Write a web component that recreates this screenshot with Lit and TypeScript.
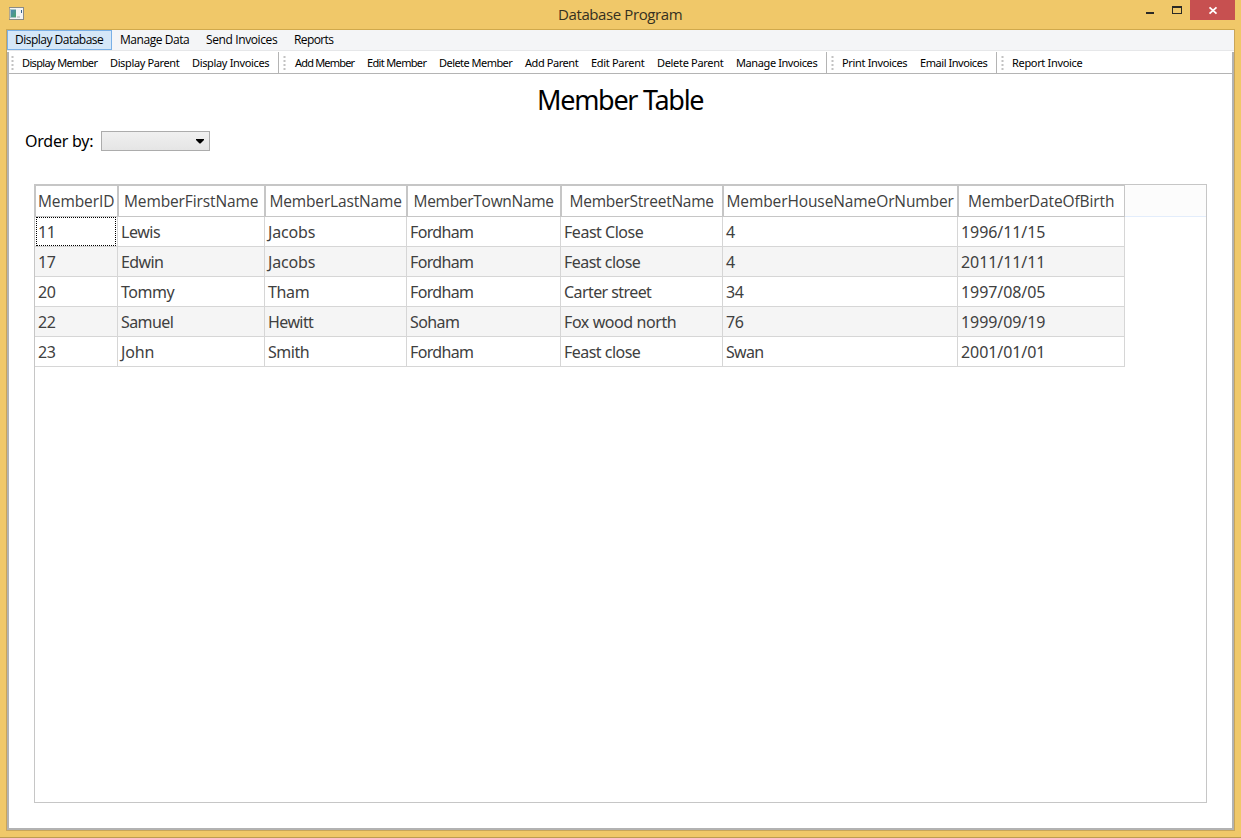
import { LitElement, html, css, svg } from "lit";
import { customElement, property } from "lit/decorators.js";

/** One line of text whose tracking is adjusted to fill a given width. */
@customElement("fit-label")
class FitLabel extends LitElement {
  @property() text = "";
  @property({ type: Number }) span = 0;

  static styles = css`
    :host { display: block; flex: none; white-space: pre; }
    .line { display: inline-block; }
  `;

  updated() {
    const el = this.renderRoot.querySelector(".line") as HTMLElement;
    el.style.letterSpacing = "0px";
    const natural = el.getBoundingClientRect().width;
    el.style.letterSpacing = `${(this.span - 0.7 - natural) / this.text.length}px`;
    this.style.width = `${this.span}px`;
  }

  render() {
    return html`<span class="line">${this.text}</span>`;
  }
}

type Item = [string, number];

const menus: Item[] = [["Display Database", 89], ["Manage Data", 70], ["Send Invoices", 72], ["Reports", 40]];

const toolbars: Item[][] = [
  [["Display Member", 76], ["Display Parent", 70], ["Display Invoices", 78]],
  [["Add Member", 60], ["Edit Member", 60], ["Delete Member", 74], ["Add Parent", 54], ["Edit Parent", 54], ["Delete Parent", 67], ["Manage Invoices", 82]],
  [["Print Invoices", 66], ["Email Invoices", 68]],
  [["Report Invoice", 71]],
];

const columns: Item[] = [
  ["MemberID", 77], ["MemberFirstName", 135], ["MemberLastName", 133], ["MemberTownName", 141],
  ["MemberStreetName", 145], ["MemberHouseNameOrNumber", 228], ["MemberDateOfBirth", 147],
];

const rows: Item[][] = [
  [["11", 18], ["Lewis", 40], ["Jacobs", 48], ["Fordham", 64], ["Feast Close", 80], ["4", 9], ["1996/11/15", 85]],
  [["17", 18], ["Edwin", 43], ["Jacobs", 48], ["Fordham", 64], ["Feast close", 77], ["4", 9], ["2011/11/11", 85]],
  [["20", 18], ["Tommy", 54], ["Tham", 42], ["Fordham", 64], ["Carter street", 88], ["34", 18], ["1997/08/05", 85]],
  [["22", 18], ["Samuel", 53], ["Hewitt", 46], ["Soham", 50], ["Fox wood north", 113], ["76", 18], ["1999/09/19", 85]],
  [["23", 18], ["John", 34], ["Smith", 42], ["Fordham", 64], ["Feast close", 77], ["Swan", 38], ["2001/01/01", 85]],
];

const label = ([text, span]: Item) => html`<fit-label .text=${text} .span=${span}></fit-label>`;

@customElement("app-root")
class AppRoot extends LitElement {
  static styles = css`
    * { box-sizing: border-box; }
    :host {
      display: flex; flex-direction: column; width: 1241px; height: 838px;
      background: #f0c869; border-bottom: 1px solid #bd9c50; box-sizing: border-box;
      padding: 0 6px 6px; font-family: "Noto Sans", "Open Sans", sans-serif; color: #000;
      overflow: hidden;
    }
    svg { display: block; flex: none; }
    .titlebar { display: grid; grid-template-columns: 1fr auto 1fr; height: 29px; flex: none; }
    .app-icon { margin: 7px 0 0 3px; }
    .caption { font: 15px/20px "Open Sans", sans-serif; color: #35301f; padding-top: 4px; }
    .controls { display: flex; justify-content: flex-end; }
    .client {
      flex: 1; min-height: 0; display: flex; flex-direction: column;
      border: 1px solid #c8a55a; border-top-color: #d0a94c; background: #fff;
    }
    .menubar {
      display: flex; flex: none; height: 21px; background: #f4f5f7; border-bottom: 1px solid #e6e7e9;
      font: 12px/18px "Open Sans", sans-serif;
    }
    .menu { height: 20px; padding: 1px 8px 0; }
    .menu.active { background: #d5e7f8; box-shadow: inset 0 0 0 1px #7ab0e6; }
    .body {
      flex: 1; min-height: 0; display: flex; flex-direction: column; margin-top: 1px;
      border: solid #b2b2b2; border-width: 0 2px 2px;
    }
    .toolrow { display: flex; flex: none; height: 22px; border-bottom: 1px solid #b4b4b4; }
    .tools {
      display: flex; gap: 12px; border-right: 1px solid #b4b4b4; padding: 0 8px 0 2px;
      font-size: 11px; line-height: 21px;
    }
    .tools:nth-child(n+2) { padding-left: 4px; }
    .tools:last-child { border: none; }
    .grip { margin: 3px -6px 0 0; }
    .tools:nth-child(2) .grip { margin-right: -5px; }
    .title { margin: 8px auto 0; height: 36px; font-size: 27px; line-height: 36px; flex: none; }
    .order { display: flex; flex: none; margin: 12px 0 0 16px; height: 22px; font-size: 16px; line-height: 22px; }
    .combo {
      width: 109px; height: 20px; margin: 1px 0 0 7px; border: 1px solid #acacac;
      background: linear-gradient(#f0f0f0, #e5e5e5); display: flex; justify-content: flex-end;
      padding: 7px 5px 0 0;
    }
    .table {
      flex: 1; min-height: 0; margin: 32px 25px 25px; border: 1px solid #c6c6c6;
      color: #404040; font-size: 16px;
    }
    .row { display: grid; grid-template-columns: 83px 147px 142px 154px 162px 235px 167px 1fr; height: 30px; }
    .head { height: 32px; font-family: "Open Sans", sans-serif; font-size: 15.5px; }
    .th {
      display: flex; justify-content: center; line-height: 31px; border: 1px solid #c6c6c6; overflow: hidden;
    }
    .filler { background: #fcfcfc; border-bottom: 1px solid #e3edfb; }
    .td {
      border-right: 1px solid #d6d6d6; border-bottom: 1px solid #d6d6d6; padding-left: 3px;
      line-height: 31px; height: 30px;
    }
    .row:nth-child(odd) .td { background: #f5f5f5; }
    .td.current { position: relative; }
    .td.current::after { content: ""; position: absolute; inset: 0 1px; border: 1px dotted #000; }
  `;

  render() {
    return html`
      <div class="titlebar">
        <svg class="app-icon" width="16" height="14" viewBox="0 0 16 14" shape-rendering="crispEdges">
          <defs>
            <linearGradient id="g" x2="1" y2="1">
              <stop offset="0" stop-color="#4f86b5" /><stop offset="1" stop-color="#4ba56b" />
            </linearGradient>
          </defs>
          <path fill="#b3a78b" d="M0 0h15v13H0z" />
          <path fill="#8b8b85" d="M0 0h15v1H0zM14 0h1v13h-1zM0 12h15v1H0z" />
          <path fill="#f4f4f4" d="M1 1h13v11H1z" />
          <path fill="#a9c4c4" d="M1 2h6v9H1z" />
          <path fill="url(#g)" d="M2 3h5v7H2z" />
          <path fill="#d0d0d0" d="M8 9h3v2H8z" />
          <path fill="#38648c" d="M12 3h1v3h-1z" />
        </svg>
        <div class="caption">${label(["Database Program", 125])}</div>
        <div class="controls">
          <svg width="91" height="20" viewBox="0 0 91 20">
            <path fill="#2b2a26" d="M2 12h8v2H2z" />
            <path fill="#2b2a26" fill-rule="evenodd" d="M28 6h10v8H28zM29 8v5h8V8z" />
            <path fill="#c75050" d="M46 0h45v20H46z" />
            <path stroke="#fff" stroke-width="1.8" d="M65.5 7.3l7 6.4M72.5 7.3l-7 6.4" />
          </svg>
        </div>
      </div>
      <div class="client">
        <div class="menubar">
          ${menus.map((m, i) => html`<div class="menu ${i === 0 ? "active" : ""}">${label(m)}</div>`)}
        </div>
        <div class="body">
          <div class="toolrow">
            ${toolbars.map((group) => html`
              <div class="tools">
                <svg class="grip" width="5" height="16" viewBox="0 0 5 16">
                  ${[1, 5, 9, 13].map((y) => svg`<rect x="0.5" y=${y} width="2" height="2" fill="#c2c2c2" />`)}
                </svg>
                ${group.map(label)}
              </div>`)}
          </div>
          <div class="title">${label(["Member Table", 167])}</div>
          <div class="order">
            ${label(["Order by:", 69])}
            <div class="combo">
              <svg width="8" height="5" viewBox="0 0 8 5"><path d="M0 0h8v1L4.5 4.5h-1L0 1z" /></svg>
            </div>
          </div>
          <div class="table">
            <div class="row head">
              ${columns.map((c) => html`<div class="th">${label(c)}</div>`)}
              <div class="filler"></div>
            </div>
            ${rows.map((r, y) => html`
              <div class="row">
                ${r.map((c, x) => html`<div class="td ${x + y === 0 ? "current" : ""}">${label(c)}</div>`)}
              </div>`)}
          </div>
        </div>
      </div>
    `;
  }
}
